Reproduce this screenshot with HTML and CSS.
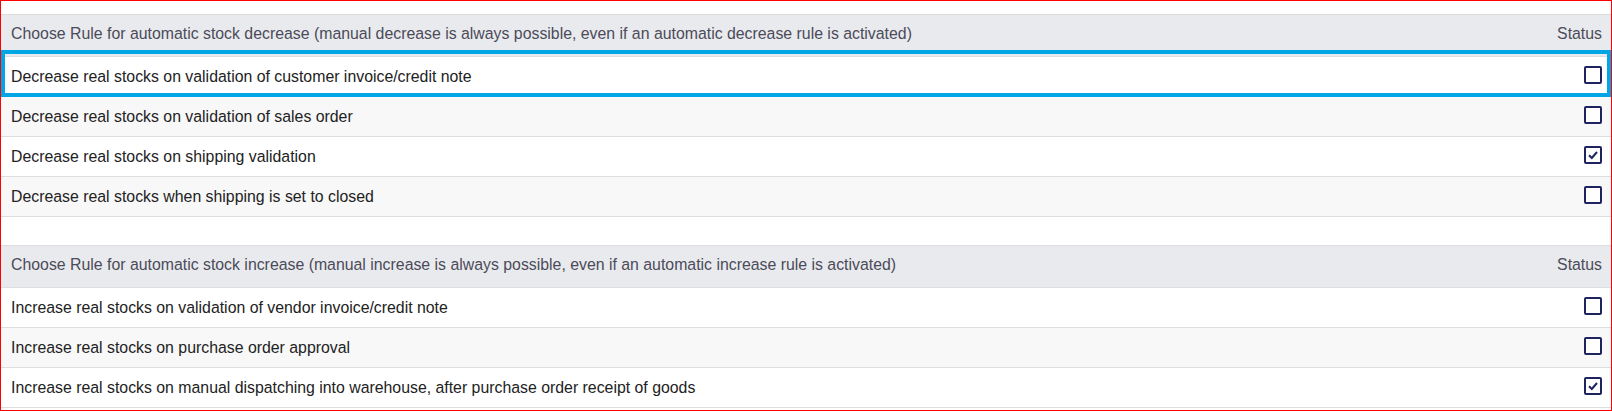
FILE: index.html
```html
<!DOCTYPE html>
<html lang="en">
<head>
    <meta charset="UTF-8">
    <meta name="viewport" content="width=device-width, initial-scale=1.0">
    <title>Stock setup</title>
    <link rel="stylesheet" href="styles.css">
</head>
<body>
    <div class="page">
        <div class="rules">
            <div class="row title">
                <span class="label">Choose Rule for automatic stock decrease (manual decrease is always possible, even if an automatic decrease rule is activated)</span>
                <span class="status">Status</span>
            </div>
            <div class="row">
                <span class="label">Decrease real stocks on validation of customer invoice/credit note</span>
                <span class="box"></span>
            </div>
            <div class="row even">
                <span class="label">Decrease real stocks on validation of sales order</span>
                <span class="box"></span>
            </div>
            <div class="row">
                <span class="label">Decrease real stocks on shipping validation</span>
                <span class="box checked"><svg viewBox="0 0 14 14"><path d="M3 7.2 L5.8 10 L11 4"/></svg></span>
            </div>
            <div class="row even">
                <span class="label">Decrease real stocks when shipping is set to closed</span>
                <span class="box"></span>
            </div>
        </div>

        <div class="rules">
            <div class="row title">
                <span class="label">Choose Rule for automatic stock increase (manual increase is always possible, even if an automatic increase rule is activated)</span>
                <span class="status">Status</span>
            </div>
            <div class="row">
                <span class="label">Increase real stocks on validation of vendor invoice/credit note</span>
                <span class="box"></span>
            </div>
            <div class="row even">
                <span class="label">Increase real stocks on purchase order approval</span>
                <span class="box"></span>
            </div>
            <div class="row">
                <span class="label">Increase real stocks on manual dispatching into warehouse, after purchase order receipt of goods</span>
                <span class="box checked"><svg viewBox="0 0 14 14"><path d="M3 7.2 L5.8 10 L11 4"/></svg></span>
            </div>
        </div>

        <div class="focus"></div>
    </div>
</body>
</html>
```

FILE: styles.css
```css
body {
    margin: 0;
    background-color: #fff;
    font-family: "Liberation Sans", Arial, sans-serif;
    font-size: 15.85px;
}

.page {
    position: relative;
    box-sizing: border-box;
    width: 1612px;
    height: 411px;
    border: 1px solid #ff0000;
    padding-top: 13px;
    display: flex;
    flex-direction: column;
    gap: 28px;
}

.rules {
    border-bottom: 1px solid #dedede;
}

.row {
    box-sizing: border-box;
    height: 40px;
    border-top: 1px solid #dedede;
    display: flex;
    align-items: center;
    justify-content: space-between;
    padding: 0 9px 0 10px;
    color: #222;
    background-color: #fff;
}

.row.even {
    background-color: #f8f8f8;
}

.row.title {
    height: 42px;
    padding-bottom: 4px;
    background-color: #e9eaed;
    color: #4b4b5a;
}

.box {
    box-sizing: border-box;
    width: 18px;
    height: 18px;
    border: 2px solid #1f2460;
    border-radius: 2px;
    background-color: #fff;
    margin-top: -3px;
    display: flex;
    align-items: center;
    justify-content: center;
}

.box svg {
    width: 14px;
    height: 14px;
}

.box path {
    fill: none;
    stroke: #1f2460;
    stroke-width: 2;
}

.focus {
    position: absolute;
    top: 49px;
    left: 0;
    right: 0;
    height: 47px;
    box-sizing: border-box;
    border: 4px solid #00a6e6;
}
```
